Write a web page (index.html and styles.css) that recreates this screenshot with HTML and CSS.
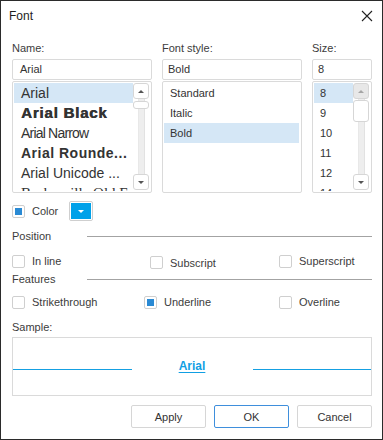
FILE: index.html
```html
<!DOCTYPE html>
<html lang="en">
<head>
  <meta charset="UTF-8">
  <title>Font</title>
  <link rel="stylesheet" href="styles.css">
</head>
<body>

  <div class="dialog">
    <div class="titlebar">
      <span class="title">Font</span>
      <span class="close">
        <svg width="12" height="12" viewBox="0 0 12 12"><path d="M1 1 L11 11 M11 1 L1 11" stroke="#222" stroke-width="1.1" fill="none"/></svg>
      </span>
    </div>

    <div class="content">
      <div class="pickers">
        <div class="picker">
          <div class="label">Name:</div>
          <div class="field name-field">Arial</div>
          <div class="list">
            <ul class="items names">
              <li class="selected">Arial</li>
              <li class="black">Arial Black</li>
              <li class="narrow">Arial Narrow</li>
              <li class="rounded">Arial Rounde...</li>
              <li>Arial Unicode ...</li>
              <li class="serif">Baskerville Old Face</li>
            </ul>
            <div class="scrollbar">
              <div class="sb-btn"><span class="arrow-up"></span></div>
              <div class="sb-track"><div class="thumb small"></div></div>
              <div class="sb-btn"><span class="arrow-down"></span></div>
            </div>
          </div>
        </div>

        <div class="picker">
          <div class="label">Font style:</div>
          <div class="field">Bold</div>
          <div class="list">
            <ul class="items">
              <li>Standard</li>
              <li>Italic</li>
              <li class="selected">Bold</li>
            </ul>
          </div>
        </div>

        <div class="picker">
          <div class="label">Size:</div>
          <div class="field">8</div>
          <div class="list">
            <ul class="items">
              <li class="selected">8</li>
              <li>9</li>
              <li>10</li>
              <li>11</li>
              <li>12</li>
              <li>14</li>
            </ul>
            <div class="scrollbar">
              <div class="sb-btn disabled"><span class="arrow-up"></span></div>
              <div class="sb-track"><div class="thumb"></div></div>
              <div class="sb-btn"><span class="arrow-down"></span></div>
            </div>
          </div>
        </div>
      </div>

      <div class="color-row">
        <div class="check"><span class="box checked"></span>Color</div>
        <div class="color-btn"><span class="arrow-white"></span></div>
      </div>

      <div class="section">
        <span class="section-name">Position</span>
        <span class="rule"></span>
      </div>
      <div class="options position">
        <div class="check"><span class="box"></span>In line</div>
        <div class="check low"><span class="box"></span>Subscript</div>
        <div class="check"><span class="box"></span>Superscript</div>
      </div>

      <div class="section features-head">
        <span class="section-name">Features</span>
        <span class="rule"></span>
      </div>
      <div class="options features">
        <div class="check"><span class="box"></span>Strikethrough</div>
        <div class="check"><span class="box checked"></span>Underline</div>
        <div class="check"><span class="box"></span>Overline</div>
      </div>

      <div class="label sample-label">Sample:</div>
      <div class="sample">
        <span class="base"></span>
        <span class="sample-text">Arial</span>
        <span class="base"></span>
      </div>

      <div class="buttons">
        <button>Apply</button>
        <button class="default">OK</button>
        <button>Cancel</button>
      </div>
    </div>
  </div>

</body>
</html>
```

FILE: styles.css
```css
html {
  box-sizing: border-box;
  background: #fff;
}

*, *:before, *:after {
  box-sizing: inherit;
}

body {
  margin: 0;
  padding: 0;
  font-family: "Liberation Sans", Arial, sans-serif;
  font-size: 11px;
  color: #3c3c3c;
}

.dialog {
  width: 383px;
  height: 440px;
  border: 1px solid #2b2b2b;
  background: #fff;
}

.titlebar {
  height: 30px;
  display: flex;
  align-items: center;
  justify-content: space-between;
  padding: 0 9px 0 8px;
}

.title {
  font-size: 12px;
  color: #1e1e1e;
}

.close {
  display: flex;
  margin-top: -1px;
}

.content {
  padding: 10px 10px 0 11px;
}

.label {
  line-height: 14px;
  height: 14px;
}

/* three pickers */
.pickers {
  display: grid;
  grid-template-columns: 140px 140px 60px;
  column-gap: 10px;
}

.picker .label {
  margin-bottom: 4px;
}

.field {
  height: 21px;
  line-height: 19px;
  border: 1px solid #dadada;
  border-radius: 2px;
  padding-left: 5px;
  color: #333;
}

.name-field {
  padding-left: 7px;
}

.list {
  margin-top: 1px;
  height: 112px;
  border: 1px solid #dadada;
  border-radius: 2px;
  padding: 1px 2px 1px 1px;
  display: flex;
  overflow: hidden;
}

.items {
  list-style: none;
  margin: 0;
  padding: 0;
  flex: 1;
  overflow: hidden;
  min-width: 0;
}

.items li {
  height: 20px;
  line-height: 20px;
  padding-left: 6px;
  white-space: nowrap;
  overflow: hidden;
  color: #333;
}

.items li.selected {
  background: #d5e7f6;
}

.names li {
  font-family: "Liberation Sans", Arial, sans-serif;
  font-size: 14px;
  padding-left: 7px;
}

.names li.black {
  font-weight: bold;
  font-size: 15px;
  letter-spacing: 0.8px;
  text-shadow: 0.6px 0 0 #333;
}

.names li.narrow {
  letter-spacing: -0.8px;
}

.names li.rounded {
  font-weight: bold;
  letter-spacing: 0.5px;
}

.names li.serif {
  font-family: "Liberation Serif", serif;
  font-size: 15px;
}

/* scrollbar */
.scrollbar {
  width: 16px;
  display: flex;
  flex-direction: column;
  padding-bottom: 1px;
}

.sb-btn {
  height: 16px;
  border: 1px solid #d6d6d6;
  border-radius: 3px;
  background: #fff;
  display: flex;
  align-items: center;
  justify-content: center;
}

.sb-btn.disabled {
  background: #e8e8e8;
}

.arrow-up {
  border-left: 3px solid transparent;
  border-right: 3px solid transparent;
  border-bottom: 3px solid #555;
}

.disabled .arrow-up {
  border-bottom-color: #a5a5a5;
}

.arrow-down {
  border-left: 3px solid transparent;
  border-right: 3px solid transparent;
  border-top: 3px solid #555;
}

.sb-track {
  flex: 1;
  background: linear-gradient(to right, transparent 5px, #e2e2e2 5px, #eeeeee 6px, #eeeeee 11px, #e2e2e2 11px, #e2e2e2 12px, transparent 12px);
}

.thumb {
  height: 22px;
  margin-top: 1px;
  border: 1px solid #d6d6d6;
  border-radius: 3px;
  background: #fff;
}

.thumb.small {
  height: 8px;
  margin-top: 2px;
}

/* checkboxes */
.check {
  display: flex;
  align-items: center;
  gap: 7px;
  white-space: nowrap;
}

.box {
  width: 13px;
  height: 13px;
  border: 1px solid #cfcfcf;
  border-radius: 2px;
  background: #fff;
  display: flex;
  align-items: center;
  justify-content: center;
}

.box.checked:after {
  content: '';
  width: 7px;
  height: 7px;
  background: #2a8ad4;
}

.color-row {
  display: flex;
  align-items: center;
  height: 20px;
  margin-top: 8px;
}

.color-btn {
  width: 24px;
  height: 20px;
  margin-left: 11px;
  border: 1px solid #cfcfcf;
  border-radius: 2px;
  padding: 1px;
  background: #00a1e9;
  background-clip: content-box;
  display: flex;
  align-items: center;
  justify-content: center;
}

.arrow-white {
  border-left: 3px solid transparent;
  border-right: 3px solid transparent;
  border-top: 3px solid #fff;
}

/* sections */
.section {
  display: flex;
  align-items: center;
  height: 14px;
  margin-top: 8px;
}

.features-head {
  margin-top: 1px;
}

.section-name {
  width: 75px;
}

.rule {
  flex: 1;
  height: 1px;
  background: #a3a3a3;
}

.options {
  display: grid;
  height: 20px;
  align-items: center;
  margin-top: 8px;
}

.position {
  grid-template-columns: 138px 129px auto;
}

.position .low {
  margin-top: 3px;
}

.features {
  grid-template-columns: 132px 135px auto;
  margin-top: 6px;
}

/* sample */
.sample-label {
  margin-top: 8px;
}

.sample {
  margin-top: 3px;
  height: 59px;
  border: 1px solid #dadada;
  display: flex;
  align-items: baseline;
  padding-top: 21px;
}

.base {
  flex: 1;
  height: 1px;
  background: #15a0e2;
}

.sample-text {
  width: 121px;
  text-align: center;
  font-size: 12px;
  line-height: 14px;
  font-weight: bold;
  color: #119fe3;
  text-decoration: underline;
  text-underline-offset: 2px;
}

/* buttons */
.buttons {
  display: flex;
  justify-content: flex-end;
  gap: 8px;
  margin-top: 9px;
}

button {
  width: 75px;
  height: 23px;
  font-family: "Liberation Sans", Arial, sans-serif;
  font-size: 11px;
  color: #333;
  background: #fff;
  border: 1px solid #d6d6d6;
  border-radius: 2px;
  padding: 0;
}

button.default {
  border-color: #3f8fdc;
}
```
